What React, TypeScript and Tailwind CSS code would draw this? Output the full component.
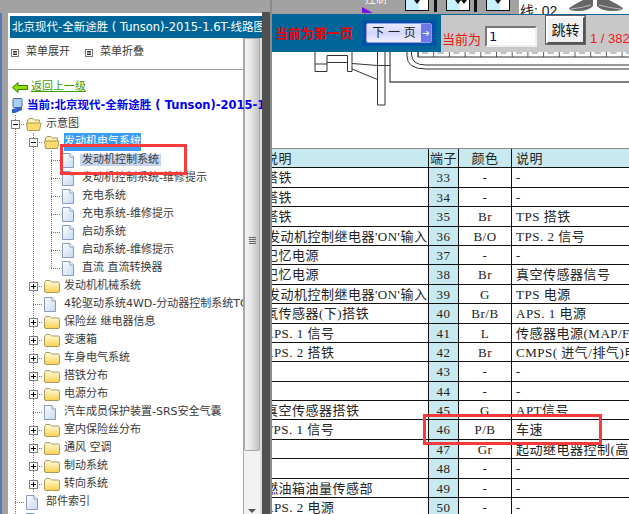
import React from 'react'

const uiFont = "font-['DejaVu_Sans','Noto_Sans_CJK_SC',sans-serif]"
const tableFont = "font-['Liberation_Serif','Noto_Sans_CJK_SC',serif]"

type Cell = 'v' | 't' | 'l' | 'e' | 'plus' | 'minus'

function TreeCell({ type }: { type: Cell }) {
  const isBox = type === 'plus' || type === 'minus'
  return (
    <svg width="18" height="18" className="shrink-0">
      {(type === 'v' || type === 't' || isBox) && (
        <line x1="9.5" y1="0" x2="9.5" y2="18" stroke="#777" strokeDasharray="1 1" />
      )}
      {type === 'l' && <line x1="9.5" y1="0" x2="9.5" y2="9" stroke="#777" strokeDasharray="1 1" />}
      {(type === 't' || type === 'l' || isBox) && (
        <line x1="9" y1="9.5" x2="20" y2="9.5" stroke="#777" strokeDasharray="1 1" />
      )}
      {isBox && (
        <g>
          <rect x="5.5" y="5.5" width="8" height="8" fill="#fff" stroke="#808080" />
          <line x1="7" y1="9.5" x2="12" y2="9.5" stroke="#000" />
          {type === 'plus' && <line x1="9.5" y1="7" x2="9.5" y2="12" stroke="#000" />}
        </g>
      )}
    </svg>
  )
}

function FolderIcon() {
  return (
    <svg width="16" height="14" viewBox="0 0 16 14" className="shrink-0">
      <defs>
        <linearGradient id="folderFill" x1="0" y1="0" x2="0" y2="1">
          <stop offset="0" stopColor="#fffbe0" />
          <stop offset="1" stopColor="#fbd24e" />
        </linearGradient>
      </defs>
      <path d="M0.5 3.5 L2 1.5 H6 L7.5 3 H14 Q15.5 3 15.5 4.5 V12 Q15.5 13.5 14 13.5 H2 Q0.5 13.5 0.5 12 Z" fill="url(#folderFill)" stroke="#a89a60" />
    </svg>
  )
}

function OpenFolderIcon() {
  return (
    <svg width="16" height="14" viewBox="0 0 16 14" className="shrink-0">
      <path d="M1.5 12.5 V3 L3 1.5 H7 L8.5 3 H13.5 V5.5" fill="#fdf0b0" stroke="#a89a60" />
      <path d="M1.5 13.5 L0.5 6 H15 L13.5 13.5 Z" fill="#fcdc6c" stroke="#a89a60" />
    </svg>
  )
}

function PageIcon() {
  return (
    <svg width="12" height="15" viewBox="0 0 12 15" className="shrink-0">
      <defs>
        <linearGradient id="pageFill" x1="0" y1="0" x2="1" y2="1">
          <stop offset="0" stopColor="#ffffff" />
          <stop offset="1" stopColor="#c4d8f2" />
        </linearGradient>
      </defs>
      <path d="M0.5 0.5 H8 L11.5 4 V14.5 H0.5 Z" fill="url(#pageFill)" stroke="#8a9bbd" />
      <path d="M8 0.5 V4 H11.5" fill="#fff" stroke="#8a9bbd" />
    </svg>
  )
}

function MenuIcon() {
  return (
    <svg width="8" height="8" viewBox="0 0 8 8" className="shrink-0">
      <rect x="0.5" y="0.5" width="7" height="7" fill="#fff" stroke="#777" />
      <path d="M2 2.5 H6 M2 4 H6 M2 5.5 H6" stroke="#000" strokeWidth="0.8" />
    </svg>
  )
}

type TreeItem = {
  cells: Cell[]
  icon: 'folder' | 'open' | 'page'
  label: string
  selected?: 'active' | 'soft'
}

const tree: TreeItem[] = [
  { cells: ['minus'], icon: 'open', label: '示意图' },
  { cells: ['v', 'minus'], icon: 'open', label: '发动机电气系统', selected: 'active' },
  { cells: ['v', 'v', 't'], icon: 'page', label: '发动机控制系统', selected: 'soft' },
  { cells: ['v', 'v', 't'], icon: 'page', label: '发动机控制系统-维修提示' },
  { cells: ['v', 'v', 't'], icon: 'page', label: '充电系统' },
  { cells: ['v', 'v', 't'], icon: 'page', label: '充电系统-维修提示' },
  { cells: ['v', 'v', 't'], icon: 'page', label: '启动系统' },
  { cells: ['v', 'v', 't'], icon: 'page', label: '启动系统-维修提示' },
  { cells: ['v', 'v', 'l'], icon: 'page', label: '直流 直流转换器' },
  { cells: ['v', 'plus'], icon: 'folder', label: '发动机机械系统' },
  { cells: ['v', 't'], icon: 'page', label: '4轮驱动系统4WD-分动器控制系统TOD' },
  { cells: ['v', 'plus'], icon: 'folder', label: '保险丝 继电器信息' },
  { cells: ['v', 'plus'], icon: 'folder', label: '变速箱' },
  { cells: ['v', 'plus'], icon: 'folder', label: '车身电气系统' },
  { cells: ['v', 'plus'], icon: 'folder', label: '搭铁分布' },
  { cells: ['v', 'plus'], icon: 'folder', label: '电源分布' },
  { cells: ['v', 't'], icon: 'page', label: '汽车成员保护装置-SRS安全气囊' },
  { cells: ['v', 'plus'], icon: 'folder', label: '室内保险丝分布' },
  { cells: ['v', 'plus'], icon: 'folder', label: '通风 空调' },
  { cells: ['v', 'plus'], icon: 'folder', label: '制动系统' },
  { cells: ['v', 'plus'], icon: 'folder', label: '转向系统' },
  { cells: ['t'], icon: 'page', label: '部件索引' },
  { cells: ['t'], icon: 'page', label: '' },
]

const rows = [
  { a: '搭铁', pin: 33, color: '-', desc: '-', pad: 'ml-[-7px]' },
  { a: '搭铁', pin: 34, color: '-', desc: '-', pad: 'ml-[-7px]' },
  { a: '搭铁', pin: 35, color: 'Br', desc: 'TPS 搭铁', pad: 'ml-[-7px]' },
  { a: "发动机控制继电器'ON'输入", pin: 36, color: 'B/O', desc: 'TPS. 2 信号', pad: 'ml-[-5px]' },
  { a: '记忆电源', pin: 37, color: '-', desc: '-', pad: 'ml-[-7px]' },
  { a: '记忆电源', pin: 38, color: 'Br', desc: '真空传感器信号', pad: 'ml-[-7px]' },
  { a: "发动机控制继电器'ON'输入", pin: 39, color: 'G', desc: 'TPS 电源', pad: 'ml-[-5px]' },
  { a: '氧传感器(下)搭铁', pin: 40, color: 'Br/B', desc: 'APS. 1 电源', pad: 'ml-[-7px]' },
  { a: 'APS. 1 信号', pin: 41, color: 'L', desc: '传感器电源(MAP/FTPS)', pad: 'ml-[-8px]' },
  { a: 'APS. 2 搭铁', pin: 42, color: 'Br', desc: 'CMPS( 进气/排气)电源', pad: 'ml-[-8px]' },
  { a: '', pin: 43, color: '-', desc: '-', pad: '' },
  { a: '', pin: 44, color: '-', desc: '-', pad: '' },
  { a: '真空传感器搭铁', pin: 45, color: 'G', desc: 'APT信号', pad: 'ml-[-7px]' },
  { a: 'TPS. 1 信号', pin: 46, color: 'P/B', desc: '车速', pad: 'ml-[-7px]' },
  { a: '', pin: 47, color: 'Gr', desc: '起动继电器控制(高速)', pad: '' },
  { a: '', pin: 48, color: '-', desc: '-', pad: '' },
  { a: '燃油箱油量传感部', pin: 49, color: '-', desc: '-', pad: 'ml-[-7px]' },
  { a: 'APS. 2 电源', pin: 50, color: '-', desc: '-', pad: 'ml-[-8px]' },
]

function ToolButton({ arrows }: { arrows: number }) {
  return (
    <svg width="24" height="11" viewBox="0 0 24 11" className="shrink-0">
      <rect x="0.5" y="-2" width="23" height="12.5" fill="#c6efff" stroke="#111" />
      <rect x="14" y="-1" width="9" height="11" fill="#fff" />
      <path d="M9 0 H15 L12 4 Z" fill="#111" />
      {arrows > 1 && <path d="M15 0 H21 L18 4 Z" fill="#111" />}
    </svg>
  )
}

function Drawing() {
  const pins = Array.from({ length: 14 }, (_, i) => 418 + i * 15.7)
  return (
    <svg viewBox="272 52 357 97" width="357" height="97" className="block" fill="none" stroke="#333">
      <path d="M315 52 V71.5 H327 V55.5 H347.5 V71.5 H352 V52" strokeWidth="1" />
      <path d="M315 64 H327 M327 62.5 H347.5" strokeWidth="1" />
      <path d="M352 63.5 L377.5 65.5 H390 M352 69 L377.5 79.5" strokeWidth="1" />
      <path d="M377.5 52 V105 H385 V52" strokeWidth="1" />
      <path d="M390 52 V82 H629" stroke="#555" strokeWidth="1.3" />
      <path d="M407 52 V56 Q407 69 426 69 H629 M411.5 52 V54 Q411.5 65 426 65 H629" strokeWidth="1" />
      <path d="M418 52 V57 H629" strokeWidth="1" />
      {pins.map((x) => (
        <path key={x} d={`M${x} 52 V57`} strokeWidth="0.8" />
      ))}
      {pins.map((x) => (
        <path key={`d${x}`} d={`M${x + 4} 53 H${x + 10}`} stroke="#6a8a9a" strokeWidth="1" />
      ))}
    </svg>
  )
}

export default function App() {
  return (
    <div className={`relative flex w-[629px] h-[514px] overflow-hidden bg-[#a2a2a2] ${uiFont}`}>
      {/* window edge */}
      <div className="w-[2px] mt-[13px] bg-[#5b7bb8] shrink-0" />
      <div className="w-[6px] shrink-0" />

      {/* Left tree panel */}
      <div className="w-[254px] shrink-0 mt-[13px] pt-[3px] pl-[2px] bg-white flex flex-col">
        <div className="h-[22px] shrink-0 bg-[#006699] text-white text-[11.5px] leading-[22px] pl-[2px] whitespace-nowrap overflow-hidden">
          北京现代-全新途胜 ( Tunson)-2015-1.6T-线路图
        </div>
        <div className="flex flex-1 min-h-0 ml-[-2px]">
          <div className="w-[236px] shrink-0 border-r border-[#a8a8a8] text-[11px] text-[#3a3a3a]">
            <div className="h-[32px] flex items-center pl-[3px] pt-[3px] pb-[5px] border-b border-[#a0a0a0]">
              <MenuIcon />
              <span className="ml-[7px]">菜单展开</span>
              <span className="ml-[15px]"><MenuIcon /></span>
              <span className="ml-[7px]">菜单折叠</span>
            </div>
            <div className="h-[27px] pt-[7px] flex items-center pl-[4px]">
              <svg width="16" height="11" viewBox="0 0 16 11" className="shrink-0">
                <path d="M0.5 5.5 L6 0.5 V3.5 H15.5 V7.5 H6 V10.5 Z" fill="#8fe000" stroke="#2f7a00" />
              </svg>
              <span className="ml-[3px] text-[#3f9b00] underline">返回上一级</span>
            </div>
            {/* this line runs over the scrollbar, up to the splitter */}
            <div className="relative z-10 w-[254px] h-[18px] flex items-center pl-[3px] whitespace-nowrap overflow-hidden">
              <svg width="12" height="16" viewBox="0 0 12 16" className="shrink-0">
                <rect x="2" y="0.5" width="9" height="9" rx="1" fill="#a8d0f5" stroke="#4a6a9a" />
                <path d="M1 11 L11 9 V12 L4 15 H1 Z" fill="#3060c8" />
              </svg>
              <span className="ml-[4px] font-bold text-[#0000ee] text-[11.5px]">当前:北京现代-全新途胜 ( Tunson)-2015-1.6T-线路图</span>
            </div>
            <div className="w-[235px] h-[406px] overflow-hidden">
              <div className="ml-[-2px]">
                {tree.map((item, i) => (
                  <div key={i} className="h-[18px] flex items-center whitespace-nowrap">
                    {item.cells.map((c, j) => (
                      <TreeCell key={j} type={c} />
                    ))}
                    <span className="w-[22px] shrink-0 pl-[2px]">
                      {item.icon === 'folder' && <FolderIcon />}
                      {item.icon === 'open' && <OpenFolderIcon />}
                      {item.icon === 'page' && <PageIcon />}
                    </span>
                    {item.selected === 'active' && (
                      <span className="bg-[#3b9cf5] text-white h-[18px] leading-[18px]">{item.label}</span>
                    )}
                    {item.selected === 'soft' && (
                      <span className="bg-[#c5d5ee] ml-[-2px] px-[2px] h-[12px] leading-[12px]">{item.label}</span>
                    )}
                    {!item.selected && <span>{item.label}</span>}
                  </div>
                ))}
              </div>
            </div>
          </div>
          {/* tree scrollbar */}
          <div className="w-[16px] shrink-0 bg-[#f1f1f1] flex flex-col">
            <div className="h-[413px] shrink-0 rounded-b-[2px] border border-[#a8a8a8] bg-gradient-to-r from-[#f4f4f4] via-[#e2e2e2] to-[#c2c2c2] flex flex-col items-center justify-center gap-[1px] pb-[8px]">
              <div className="w-[7px] h-[1px] bg-[#666]" />
              <div className="w-[7px] h-[1px] bg-[#666]" />
              <div className="w-[7px] h-[1px] bg-[#666]" />
              <div className="w-[7px] h-[1px] bg-[#666]" />
            </div>
            <div className="flex-1 flex items-end justify-center pb-[1px]">
              <div className="w-0 h-0 border-l-[4px] border-r-[4px] border-t-[4px] border-l-transparent border-r-transparent border-t-[#555]" />
            </div>
          </div>
          <div className="w-[2px] shrink-0 bg-[#dcdcdc]" />
        </div>
      </div>

      {/* splitter */}
      <div className="relative z-20 w-[8px] mt-[12px] shrink-0 bg-[#505050]" />
      <div className="w-[2px] shrink-0 bg-[#8c8c8c]" />

      {/* Right viewer */}
      <div className="w-[357px] shrink-0 flex flex-col">
        <div className="h-[14px] shrink-0 flex bg-[#a2a2a2] overflow-hidden">
          <div className="w-[90px] shrink-0" />
          <div className="w-[24px] shrink-0 flex flex-col">
            <span className="block text-white text-[11px] leading-[0px] h-[5px] overflow-hidden ml-[3px] whitespace-nowrap">控制</span>
            <svg width="12" height="6" viewBox="0 0 12 6" className="mt-[2px]">
              <path d="M0 0 L11 6 H0 Z" fill="#7a10e0" />
            </svg>
          </div>
          <div className="w-[19px] shrink-0" />
          <ToolButton arrows={1} />
          <div className="w-[5px] shrink-0" />
          <div className="w-[3px] h-[12px] shrink-0 bg-[#111]" />
          <div className="w-[9px] shrink-0" />
          <ToolButton arrows={2} />
          <div className="w-[4px] shrink-0" />
          <div className="w-[3px] h-[12px] shrink-0 bg-[#111]" />
          <div className="w-[9px] shrink-0" />
          <ToolButton arrows={1} />
          <div className="w-[9px] shrink-0" />
          <div className="flex-1 bg-white flex overflow-hidden">
            <span className="ml-[1px] mt-[3px] text-[14px] leading-[16px] whitespace-nowrap text-[#222] font-['Liberation_Sans','Noto_Sans_CJK_SC',sans-serif]">线: 02</span>
            <svg width="60" height="14" viewBox="0 0 60 14" className="ml-[10px] shrink-0">
              <path d="M2 8 Q10 3 16 0 H26 V6 Q22 11 10 11 Q2 11 2 8 Z" fill="#666" />
              <path d="M4 9 Q14 8 24 5" stroke="#bbb" strokeWidth="1" fill="none" />
              <path d="M30 0 H42 Q50 4 56 8 Q56 11 46 11 Q34 11 30 6 Z" fill="#666" />
              <path d="M32 5 Q42 8 54 9" stroke="#bbb" strokeWidth="1" fill="none" />
            </svg>
          </div>
        </div>

        {/* Pager */}
        <div className="h-[38px] shrink-0 flex border-t border-[#006699]">
          <div className="w-[169px] shrink-0 bg-[#006699] flex items-center">
            <span className={`ml-[3px] text-[13px] font-bold text-[#f00000] whitespace-nowrap ${tableFont}`}>当前为第一页</span>
            <div className="ml-[9px] w-[74px] h-[26px] bg-[#0052a8] flex items-center justify-center mb-[2px]">
              <div className="w-[66px] h-[20px] border border-[#9a9ae8] rounded-[2px] bg-gradient-to-b from-[#e8e8ff] via-[#d4d6fa] to-[#eeeeff] flex items-center">
                <span className="flex-1 text-center text-[12px] text-[#222] whitespace-nowrap">下 一 页</span>
                <span className="w-[10px] h-full bg-[#6d78e6] text-white text-[9px] leading-[18px] text-center font-bold">➔</span>
              </div>
            </div>
          </div>
          <div className="flex-1 bg-[#c8c8c8] relative flex items-end">
            <span className={`ml-[1px] mb-[3px] text-[13px] text-[#f01010] whitespace-nowrap ${tableFont}`}>当前为</span>
            <input
              readOnly
              value="1"
              className="ml-[4px] mb-[5px] w-[52px] h-[21px] bg-white border-2 border-t-[#777] border-l-[#777] border-r-[#eee] border-b-[#eee] px-[2px] text-[13px] text-[#001060] outline-none"
            />
            <button className="ml-[9px] mb-[8px] w-[39px] h-[28px] bg-[#f0f0f0] border-2 border-t-[#fff] border-l-[#fff] border-r-[#555] border-b-[#555] outline outline-1 outline-[#666] text-[14px] text-[#111]">
              跳转
            </button>
            <span className="ml-[5px] mb-[4px] text-[13px] text-[#f01818] whitespace-nowrap font-['Liberation_Sans',sans-serif]">1 / 382</span>
          </div>
        </div>

        <div className="h-[96px] shrink-0 bg-white overflow-hidden">
          <Drawing />
        </div>

        {/* Pin table */}
        <div className={`flex-1 min-h-0 bg-white border-t border-[#8a8a8a] text-[13px] text-[#222] overflow-hidden ${tableFont}`}>
          <div className="flex h-[19.4px] bg-[#c9e9f0] border-b border-[#111] leading-[20px] tracking-[0.5px]">
            <div className="w-[156px] shrink-0 overflow-hidden whitespace-nowrap"><span className="block ml-[-7px]">说明</span></div>
            <div className="w-[30px] shrink-0 border-l border-[#111] text-center whitespace-nowrap">端子</div>
            <div className="w-[53px] shrink-0 border-l border-[#111] text-center">颜色</div>
            <div className="flex-1 border-l border-[#111] pl-[4px] whitespace-nowrap">说明</div>
          </div>
          {rows.map((r) => (
            <div key={r.pin} className="flex h-[19.4px] border-b border-[#111] leading-[20px] tracking-[0.5px]">
              <div className="w-[156px] shrink-0 overflow-hidden whitespace-nowrap"><span className={`block ${r.pad}`}>{r.a}</span></div>
              <div className="w-[30px] shrink-0 border-l border-[#111] bg-[#c9e9f0] text-center">{r.pin}</div>
              <div className="w-[53px] shrink-0 border-l border-[#111] text-center">{r.color}</div>
              <div className="flex-1 min-w-0 border-l border-[#111] pl-[4px] whitespace-nowrap overflow-hidden">{r.desc}</div>
            </div>
          ))}
        </div>
      </div>

      {/* red annotations */}
      <div className="absolute z-30 left-[60px] top-[144px] w-[127px] h-[31px] border-[3px] border-[#f93a3a]" />
      <div className="absolute z-30 left-[423px] top-[414px] w-[179px] h-[31px] border-[3px] border-[#f93a3a]" />
    </div>
  )
}
